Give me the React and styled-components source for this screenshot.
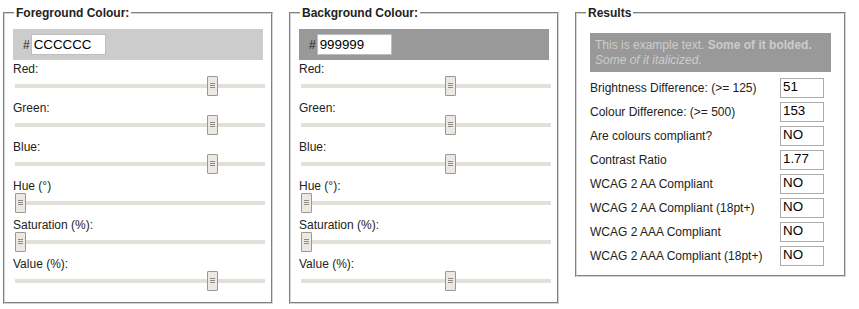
import React from 'react';
import styled, { createGlobalStyle } from 'styled-components';

const Global = createGlobalStyle`
  html, body { margin: 0; padding: 0; background: #fff; }
  body {
    font-family: "Liberation Sans", Arial, sans-serif;
    font-size: 12px;
    color: #222;
  }
`;

const Page = styled.div`
  display: flex;
  align-items: flex-start;
  gap: 16px;
  padding: 6px 0 0 3px;
`;

const Panel = styled.fieldset`
  box-sizing: border-box;
  width: ${p => p.$w}px;
  margin: 0;
  padding: ${p => p.$pad};
  border: 2px groove #d4d4d4;
  min-width: 0;
`;

const Legend = styled.legend`
  margin-left: ${p => p.$ml}px;
  padding: 0 2px;
  font-weight: bold;
  font-size: 12px;
  line-height: 14px;
  color: #222;
`;

const Swatch = styled.div`
  display: flex;
  align-items: center;
  gap: 1px;
  height: 31px;
  box-sizing: border-box;
  padding: 0 0 0 10px;
  margin-bottom: 2px;
  background: ${p => p.$bg};
`;

const Hash = styled.span`
  font-size: 12px;
  color: #222;
`;

const HexInput = styled.input`
  box-sizing: border-box;
  width: 75px;
  height: 21px;
  border: 1px solid #bdbdbd;
  padding: 1px 2px;
  font-family: "Liberation Sans", Arial, sans-serif;
  font-size: 13.33px;
  color: #000;
  background: #fff;
  outline: none;
`;

const Row = styled.div`
  display: flex;
  flex-direction: column;
`;

const Label = styled.label`
  display: block;
  line-height: 14px;
  font-size: 12px;
  color: #222;
`;

const SliderArea = styled.div`
  position: relative;
  height: 20px;
  margin-bottom: 5px;
`;

const Track = styled.div`
  width: 250px;
  height: 4px;
  margin: 8px 0 0 2px;
  background: #e3e0da;
`;

const Handle = styled.div`
  position: absolute;
  top: 0;
  box-sizing: border-box;
  width: 11px;
  height: 20px;
  border: 1px solid #9d978f;
  border-radius: 1px;
  background: #ece9e5;
  &::before {
    content: "";
    position: absolute;
    left: 2px;
    top: 8px;
    width: 5px;
    height: 1px;
    background: #8f8a84;
    box-shadow: 0 -2px 0 #8f8a84, 0 2px 0 #8f8a84;
  }
`;

const Example = styled.div`
  background: #999999;
  color: #cccccc;
  padding: 5px 5px 4px 5px;
  line-height: 15px;
  font-size: 12px;
  margin-bottom: 6px;
`;

const ResultsGrid = styled.div`
  display: grid;
  grid-template-columns: 190px 44px;
  row-gap: 4px;
  align-items: center;
`;

const ResultLabel = styled.span`
  font-size: 12px;
  color: #222;
`;

const ResultInput = styled.input`
  box-sizing: border-box;
  width: 44px;
  height: 20px;
  border: 1px solid #ababab;
  padding: 0 2px 3px;
  font-family: "Liberation Sans", Arial, sans-serif;
  font-size: 13.33px;
  color: #000;
  background: #fff;
  outline: none;
`;

function Slider({ label, frac }) {
  return (
    <Row>
      <Label>{label}</Label>
      <SliderArea>
        <Track />
        <Handle style={{ left: `${2 + Math.round(frac * 240)}px` }} />
      </SliderArea>
    </Row>
  );
}

function ColourPanel({ title, hex, bg, frac, hueColon }) {
  const sliders = [
    ['Red:', frac],
    ['Green:', frac],
    ['Blue:', frac],
    [hueColon ? 'Hue (°):' : 'Hue (°)', 0],
    ['Saturation (%):', 0],
    ['Value (%):', frac],
  ];
  return (
    <Panel $w={270} $pad="9px 8px 6px 8px">
      <Legend $ml={1}>{title}</Legend>
      <Swatch $bg={bg}>
        <Hash>#</Hash>
        <HexInput value={hex} readOnly />
      </Swatch>
      {sliders.map(([l, f]) => (
        <Slider key={l} label={l} frac={f} />
      ))}
    </Panel>
  );
}

const results = [
  ['Brightness Difference: (>= 125)', '51'],
  ['Colour Difference: (>= 500)', '153'],
  ['Are colours compliant?', 'NO'],
  ['Contrast Ratio', '1.77'],
  ['WCAG 2 AA Compliant', 'NO'],
  ['WCAG 2 AA Compliant (18pt+)', 'NO'],
  ['WCAG 2 AAA Compliant', 'NO'],
  ['WCAG 2 AAA Compliant (18pt+)', 'NO'],
];

export default function App() {
  return (
    <>
      <Global />
      <Page>
        <ColourPanel title="Foreground Colour:" hex="CCCCCC" bg="#cccccc" frac={204 / 255} />
        <ColourPanel title="Background Colour:" hex="999999" bg="#999999" frac={153 / 255} hueColon />
        <Panel $w={271} $pad="13px 13px 9px 13px">
          <Legend $ml={-4}>Results</Legend>
          <Example>
            This is example text. <b>Some of it bolded.</b> <i>Some of it italicized.</i>
          </Example>
          <ResultsGrid>
            {results.map(([l, v]) => (
              <React.Fragment key={l}>
                <ResultLabel>{l}</ResultLabel>
                <ResultInput value={v} readOnly />
              </React.Fragment>
            ))}
          </ResultsGrid>
        </Panel>
      </Page>
    </>
  );
}
